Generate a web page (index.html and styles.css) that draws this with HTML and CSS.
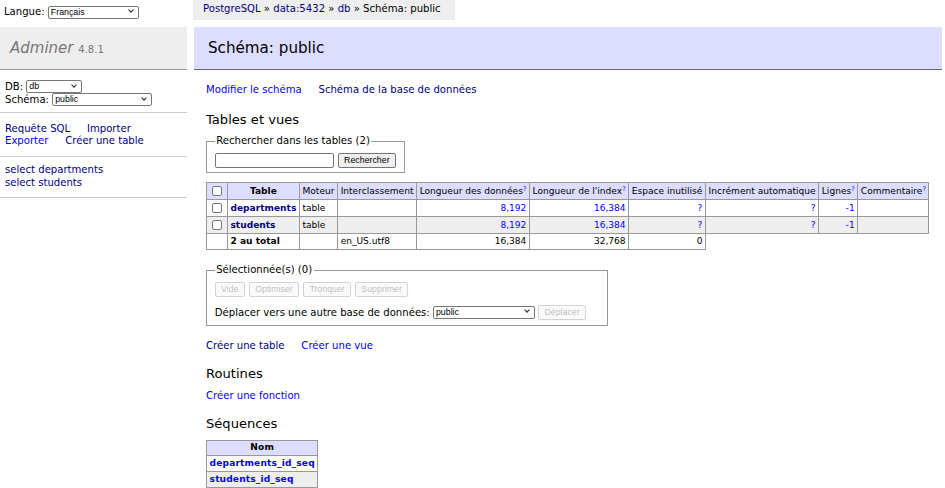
FILE: index.html
```html
<!DOCTYPE html>
<html lang="fr">
<head>
<meta charset="utf-8">
<title>Schéma: public - Adminer</title>
<link rel="stylesheet" href="styles.css">
</head>
<body>
<div class="page">
  <aside class="menu">
    <div class="lang">Langue: <span class="sel w-lang"><select><option>Français</option></select></span></div>
    <h1><a class="h1" href="#">Adminer</a> <span class="version">4.8.1</span></h1>
    <div class="dbs">
      <div class="dbrow">DB: <span class="sel w-db"><select><option>db</option></select></span></div>
      <div class="dbrow">Schéma: <span class="sel w-ns"><select><option>public</option></select></span></div>
    </div>
    <p class="links side-links"><a class="v" href="#">Requête SQL</a> <a class="v" href="#">Importer</a><br><a href="#">Exporter</a> <a class="v" href="#">Créer une table</a></p>
    <ul class="tables">
      <li><a class="v" href="#">select</a> <a class="v" href="#">departments</a></li>
      <li><a class="v" href="#">select</a> <a class="v" href="#">students</a></li>
    </ul>
  </aside>
  <main class="content">
    <div class="breadcrumb"><a class="v" href="#">PostgreSQL</a> » <a class="v" href="#">data:5432</a> » <a class="v" href="#">db</a> » Schéma: public</div>
    <h2>Schéma: public</h2>
    <div class="inner">
      <p class="links first-links"><a href="#">Modifier le schéma</a> <a class="v" href="#">Schéma de la base de données</a></p>
      <h3 class="h-tables">Tables et vues</h3>
      <fieldset class="fs-search">
        <legend>Rechercher dans les tables (2)</legend>
        <div class="row"><input class="txt" type="search"><button class="btn btn-search" type="button">Rechercher</button></div>
      </fieldset>
      <table class="grid main-table">
        <thead>
          <tr>
            <td class="cbcell"><input class="cb" type="checkbox"></td>
            <th>Table</th>
            <td>Moteur</td>
            <td>Interclassement</td>
            <td>Longueur des données<sup><a href="#">?</a></sup></td>
            <td>Longueur de l'index<sup><a href="#">?</a></sup></td>
            <td>Espace inutilisé</td>
            <td>Incrément automatique</td>
            <td>Lignes<sup><a href="#">?</a></sup></td>
            <td>Commentaire<sup><a href="#">?</a></sup></td>
          </tr>
        </thead>
        <tbody>
          <tr>
            <td class="cbcell"><input class="cb" type="checkbox"></td>
            <th><a class="v" href="#">departments</a></th>
            <td>table</td>
            <td></td>
            <td class="num"><a href="#">8,192</a></td>
            <td class="num"><a href="#">16,384</a></td>
            <td class="num"><a href="#">?</a></td>
            <td class="num"><a href="#">?</a></td>
            <td class="num"><a href="#">-1</a></td>
            <td></td>
          </tr>
          <tr class="even">
            <td class="cbcell"><input class="cb" type="checkbox"></td>
            <th><a class="v" href="#">students</a></th>
            <td>table</td>
            <td></td>
            <td class="num"><a href="#">8,192</a></td>
            <td class="num"><a href="#">16,384</a></td>
            <td class="num"><a href="#">?</a></td>
            <td class="num"><a href="#">?</a></td>
            <td class="num"><a href="#">-1</a></td>
            <td></td>
          </tr>
          <tr class="total">
            <td></td>
            <th>2 au total</th>
            <td></td>
            <td>en_US.utf8</td>
            <td class="num">16,384</td>
            <td class="num">32,768</td>
            <td class="num">0</td>
          </tr>
        </tbody>
      </table>
      <fieldset class="fs-sel">
        <legend>Sélectionnée(s) (0)</legend>
        <div class="row">
          <button class="btn" type="button" disabled>Vide</button>
          <button class="btn" type="button" disabled>Optimiser</button>
          <button class="btn" type="button" disabled>Tronquer</button>
          <button class="btn" type="button" disabled>Supprimer</button>
        </div>
        <p class="move">Déplacer vers une autre base de données: <span class="sel w-move"><select><option>public</option></select></span> <button class="btn" type="button" disabled>Déplacer</button></p>
      </fieldset>
      <p class="links create-links"><a class="v" href="#">Créer une table</a> <a href="#">Créer une vue</a></p>
      <h3 class="h-routines">Routines</h3>
      <p class="links fn-links"><a href="#">Créer une fonction</a></p>
      <h3 class="h-seq">Séquences</h3>
      <table class="grid seq-table">
        <thead><tr><th>Nom</th></tr></thead>
        <tbody>
          <tr><th><a href="#">departments_id_seq</a></th></tr>
          <tr class="even"><th><a href="#">students_id_seq</a></th></tr>
        </tbody>
      </table>
    </div>
  </main>
</div>
</body>
</html>
```
FILE: styles.css
```css
body {
  margin: 0;
  font: 10.1px/1.25 "DejaVu Sans", Verdana, sans-serif;
  color: #000;
  background: #fff;
}
a { color: blue; text-decoration: none; }
a.v { color: navy; }

.page {
  display: grid;
  grid-template-columns: 187px 1fr;
  column-gap: 6px;
  align-items: start;
}

/* ---------- sidebar ---------- */
.lang {
  height: 27px;
  box-sizing: border-box;
  padding: 3px 4px 0;
  line-height: 18px;
}
h1 {
  margin: 0;
  padding: 11.6px 10px;
  font-size: 15px;
  line-height: 1.25;
  font-weight: normal;
  background: #eee;
  border-bottom: 1px solid #999;
  color: #777;
}
.h1 { color: #777; font-style: italic; }
.version { color: #777; font-size: 67%; }

.dbs {
  padding: 10px 5px 6px;
  border-bottom: 1px solid #ccc;
}
.dbrow { height: 13px; line-height: 13px; }

.side-links {
  margin: 0;
  padding: 9.8px 5px 7.6px;
  border-bottom: 1px solid #ccc;
}
.links a { white-space: nowrap; margin-right: 13.6px; }

.tables {
  margin: 0;
  padding: 7.6px 5px;
  list-style: none;
  border-bottom: 1px solid #ccc;
}

/* ---------- form controls ---------- */
.sel {
  position: relative;
  display: inline-block;
  box-sizing: border-box;
  height: 13px;
  border: 1px solid #767676;
  border-radius: 2px;
  background: #fff;
  vertical-align: middle;
}
.sel select {
  appearance: none;
  -webkit-appearance: none;
  display: block;
  width: 100%;
  height: 11px;
  margin: 0;
  padding: 0 0 0 2px;
  border: 0;
  background: transparent;
  font: 8.8px/11px "Liberation Sans", Arial, sans-serif;
  color: #000;
}
.sel::after {
  content: "";
  position: absolute;
  right: 5px;
  top: 1.5px;
  width: 3px;
  height: 3px;
  border-right: 1.5px solid #222;
  border-bottom: 1.5px solid #222;
  transform: rotate(45deg);
}
.w-lang { width: 91px; }
.w-db { width: 56px; }
.w-ns { width: 100px; }
.w-move { width: 102px; }

.txt {
  box-sizing: border-box;
  width: 119px;
  height: 15px;
  margin: 0;
  padding: 0 2px;
  border: 1px solid #767676;
  border-radius: 2px;
  font: 8.8px "Liberation Sans", Arial, sans-serif;
}
.btn {
  box-sizing: border-box;
  height: 15px;
  margin: 0;
  padding: 0 5.3px;
  border: 1px solid #767676;
  border-radius: 2px;
  background: #efefef;
  color: #000;
  font: 8.8px/13px "Liberation Sans", Arial, sans-serif;
  vertical-align: middle;
}
.btn:disabled {
  color: rgba(16, 16, 16, 0.3);
  background: rgba(239, 239, 239, 0.3);
  border-color: rgba(118, 118, 118, 0.3);
}
.cb {
  appearance: none;
  -webkit-appearance: none;
  display: inline-block;
  box-sizing: border-box;
  width: 10px;
  height: 10px;
  margin: 1.2px 2px 1.2px 2.7px;
  border: 1px solid #767676;
  border-radius: 2px;
  background: #fff;
  vertical-align: middle;
}

/* ---------- main ---------- */
.content { padding-right: 3px; }
.breadcrumb {
  width: fit-content;
  height: 20px;
  line-height: 18px;
  padding: 0 14px 0 10px;
  background: #eee;
  white-space: nowrap;
}
h2 {
  margin: 7px 0 14px 1px;
  padding: 11.6px 14px;
  font-size: 15.15px;
  line-height: 1.25;
  font-weight: normal;
  background: #ddf;
  border-bottom: 1px solid #666;
}
.inner { padding-left: 13px; }
.inner p { margin: 0; }
h3 {
  margin: 0;
  font-size: 13.1px;
  line-height: 1.25;
  font-weight: normal;
}
.h-tables { margin-top: 14.8px; }

fieldset {
  width: fit-content;
  margin: 7.2px 0 0;
  padding: 4.9px 7.8px;
  border: 1px solid #999;
}
legend { padding: 0 1.4px; line-height: 12.6px; }
.row { display: flex; gap: 4px; align-items: center; }
.btn-search { width: 58px; }

table.grid {
  border-collapse: collapse;
  font-size: 9.07px;
  line-height: 1.25;
}
.grid td, .grid th {
  border: 1px solid #999;
  padding: 1.8px 2.6px;
  text-align: left;
  white-space: nowrap;
}
.seq-table th { letter-spacing: 0.15px; }
.grid thead td, .grid thead th { background: #ddf; }
.grid thead th { text-align: center; padding: 1.8px 4.9px; }
.grid tbody tr { background: #fff; }
.grid tbody tr.even { background: #eee; }
.grid .num { text-align: right; }
.grid .cbcell { padding: 1.8px 2.6px; }
sup { font-size: 72%; line-height: 0; vertical-align: 0.5em; }

.main-table { margin-top: 9px; }
.fs-sel {
  box-sizing: border-box;
  width: 402px;
  margin-top: 14.2px;
}
.move { margin-top: 7.8px !important; white-space: nowrap; }
.create-links { margin-top: 14.3px !important; }
.h-routines { margin-top: 13.5px; }
.fn-links { margin-top: 7.5px !important; }
.h-seq { margin-top: 13.5px; }
.seq-table { margin-top: 7.2px; }
```
